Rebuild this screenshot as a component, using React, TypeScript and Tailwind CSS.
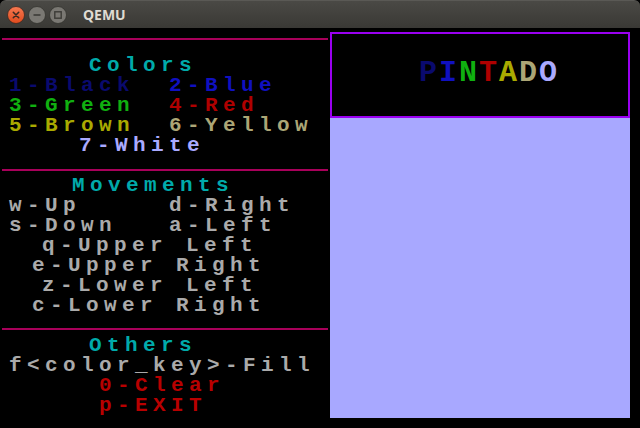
const mono = "font-['Liberation_Mono',monospace] font-bold";

function Row({ className = "pl-[7px]", children }: { className?: string; children: React.ReactNode }) {
  return (
    <div className={`h-[20px] leading-[20px] text-[21px] tracking-[5.4px] whitespace-pre ${mono} ${className}`}>
      {children}
    </div>
  );
}

function Pair({ a, b, ca, cb }: { a: string; b: string; ca: string; cb: string }) {
  return (
    <Row>
      <span className={`inline-block w-[160px] ${ca}`}>{a}</span>
      <span className={cb}>{b}</span>
    </Row>
  );
}

function Divider({ mt }: { mt: string }) {
  return <div className={`h-[2px] bg-[#a8005a] ${mt}`} />;
}

const letters = [
  ["P", "text-[#0a0a6e]"],
  ["I", "text-[#1010c0]"],
  ["N", "text-[#10b010]"],
  ["T", "text-[#b00000]"],
  ["A", "text-[#aaaa00]"],
  ["D", "text-[#aca676]"],
  ["O", "text-[#aaaaff]"],
];

export default function App() {
  const gray = "text-[#aaaaaa]";
  const cyan = "text-[#00aaaa]";
  const red = "text-[#b80000]";

  return (
    <div className="w-[640px] h-[428px] flex flex-col bg-black overflow-hidden">
      {/* Title bar */}
      <div className="h-[28px] flex items-center bg-gradient-to-b from-[#4a4945] to-[#3a3935] rounded-t-[6px] border-t border-[#5a5955]">
        <div className="flex items-center gap-[3px] pl-[7px]">
          <svg width="18" height="18" viewBox="0 0 18 18">
            <defs>
              <linearGradient id="cl" x1="0" y1="0" x2="0" y2="1">
                <stop offset="0" stopColor="#f77a52" />
                <stop offset="1" stopColor="#df4a1d" />
              </linearGradient>
            </defs>
            <circle cx="9" cy="9" r="8.5" fill="url(#cl)" stroke="#3a2a22" strokeWidth="0.8" />
            <path d="M6.3 6.3 L11.7 11.7 M11.7 6.3 L6.3 11.7" stroke="#3b2a22" strokeWidth="1.6" strokeLinecap="round" />
          </svg>
          <svg width="18" height="18" viewBox="0 0 18 18">
            <circle cx="9" cy="9" r="8.5" fill="#7a7873" stroke="#34332f" strokeWidth="0.8" />
            <path d="M5.5 9 H12.5" stroke="#3c3b37" strokeWidth="1.6" />
          </svg>
          <svg width="18" height="18" viewBox="0 0 18 18">
            <circle cx="9" cy="9" r="8.5" fill="#7a7873" stroke="#34332f" strokeWidth="0.8" />
            <rect x="5.8" y="5.8" width="6.4" height="6.4" fill="none" stroke="#3c3b37" strokeWidth="1.4" />
          </svg>
        </div>
        <span className="ml-[16px] text-[14px] font-bold text-[#dfdbd2] font-['Noto_Sans',sans-serif]">QEMU</span>
      </div>

      {/* Screen */}
      <div className="flex-1 flex">
        <div className="w-[330px] px-[2px]">
          <Divider mt="mt-[10px]" />
          <div className="mt-[16px]">
            <Row className="pl-[87px]"><span className={cyan}>Colors</span></Row>
            <Pair a="1-Black" b="2-Blue" ca="text-[#0a0a6e]" cb="text-[#1010c0]" />
            <Pair a="3-Green" b="4-Red" ca="text-[#10b010]" cb="text-[#b00000]" />
            <Pair a="5-Brown" b="6-Yellow" ca="text-[#aaaa00]" cb="text-[#aca676]" />
            <Row className="pl-[77px]"><span className="text-[#aaaaff]">7-White</span></Row>
          </div>
          <Divider mt="mt-[13px]" />
          <div className="mt-[5px]">
            <Row className="pl-[70px]"><span className={cyan}>Movements</span></Row>
            <Pair a="w-Up" b="d-Right" ca={gray} cb={gray} />
            <Pair a="s-Down" b="a-Left" ca={gray} cb={gray} />
            <Row className="pl-[40px]"><span className={gray}>q-Upper Left</span></Row>
            <Row className="pl-[30px]"><span className={gray}>e-Upper Right</span></Row>
            <Row className="pl-[40px]"><span className={gray}>z-Lower Left</span></Row>
            <Row className="pl-[30px]"><span className={gray}>c-Lower Right</span></Row>
          </div>
          <Divider mt="mt-[12px]" />
          <div className="mt-[6px]">
            <Row className="pl-[87px]"><span className={cyan}>Others</span></Row>
            <Row><span className={gray}>f&lt;color_key&gt;-Fill</span></Row>
            <Row className="pl-[97px]"><span className={red}>0-Clear</span></Row>
            <Row className="pl-[97px]"><span className={red}>p-EXIT</span></Row>
          </div>
        </div>

        <div className="w-[300px] pt-[4px]">
          <div className="h-[86px] border-2 border-[#9a00f0]">
            <div className={`pt-[27px] pl-[87px] text-[30px] leading-[24px] tracking-[2px] ${mono}`}>
              {letters.map(([ch, c]) => (
                <span key={ch + c} className={c}>{ch}</span>
              ))}
            </div>
          </div>
          <div className="h-[300px] bg-[#a8a8ff]" />
        </div>
      </div>
    </div>
  );
}
